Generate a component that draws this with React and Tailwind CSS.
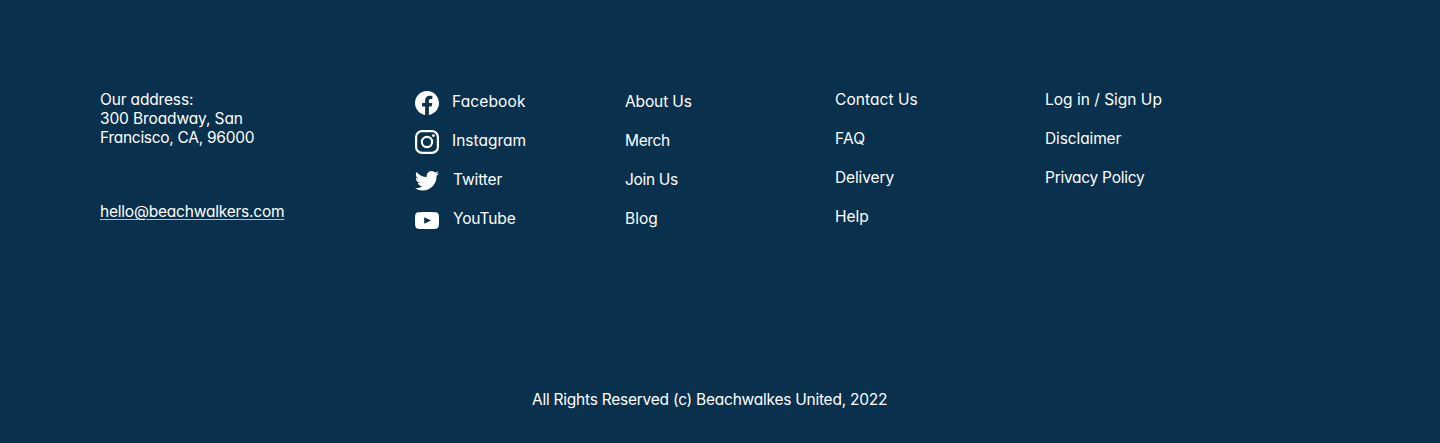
import React from "react";
import { BsFacebook, BsTwitter } from "react-icons/bs";

const InstagramIcon = () => (
  <svg viewBox="0 0 24 24" className="size-6" fill="none" stroke="currentColor">
    <rect x="1.1" y="1.1" width="21.8" height="21.8" rx="6" strokeWidth="2.2" />
    <circle cx="12" cy="12" r="5.1" strokeWidth="2.2" />
    <circle cx="18.4" cy="5.6" r="1.45" fill="currentColor" stroke="none" />
  </svg>
);

const YouTubeIcon = () => (
  <svg viewBox="0 0 24 17" className="h-[17px] w-6" fill="currentColor">
    <path
      fillRule="evenodd"
      d="M12 0C15.500 0 18.500.1 20.800.35C22.700.55 23.600 1.700 23.800 3.300C24.070 6.700 24.070 10.300 23.800 13.700C23.600 15.300 22.700 16.450 20.800 16.650C18.500 16.900 15.500 17 12 17S5.500 16.900 3.200 16.650C1.300 16.450.4 15.300.2 13.700C-.07 10.300-.07 6.700.2 3.300C.4 1.700 1.300.55 3.200.35C5.500.1 8.500 0 12 0ZM9.200 5.300V11.700L16 8.500Z"
    />
  </svg>
);

const socials = [
  { name: "Facebook", icon: <BsFacebook className="size-6" />, style: "pl-[13px] tracking-[0.14px]" },
  { name: "Instagram", icon: <InstagramIcon />, style: "pl-[13px]" },
  { name: "Twitter", icon: <BsTwitter className="mb-[2px] size-6" />, style: "pl-[14px] tracking-[-0.1px]" },
  { name: "YouTube", icon: <YouTubeIcon />, style: "pl-[14px] tracking-[-0.14px]" },
];

const columns = [
  {
    pad: "pt-[2px]",
    items: [
      ["About Us", "tracking-[-0.12px]"],
      ["Merch", "tracking-[-0.35px]"],
      ["Join Us", "tracking-[-0.33px]"],
      ["Blog", ""],
    ],
  },
  {
    pad: "",
    items: [
      ["Contact Us", "tracking-[0.06px]"],
      ["FAQ", "tracking-[0.2px]"],
      ["Delivery", "tracking-[-0.12px]"],
      ["Help", ""],
    ],
  },
  {
    pad: "",
    items: [
      ["Log in / Sign Up", ""],
      ["Disclaimer", "tracking-[-0.12px]"],
      ["Privacy Policy", "tracking-[-0.27px]"],
    ],
  },
];

export default function App() {
  return (
    <footer className="flex h-[443px] w-full flex-col bg-[#09304c] pt-[90px] font-['Inter',sans-serif] text-[15.5px] leading-[19px] text-white [font-feature-settings:'cv11']">
      <div className="flex pl-[100px]">
        <div className="w-[315px]">
          <p className="flex flex-col whitespace-nowrap">
            <span className="tracking-[-0.16px]">Our address:</span>
            <span className="tracking-[-0.12px]">300 Broadway, San</span>
            <span className="tracking-[-0.28px]">Francisco, CA, 96000</span>
          </p>
          <a className="mt-[55px] inline-block tracking-[-0.21px] underline decoration-white/70 decoration-1 underline-offset-2">
            hello@beachwalkers.com
          </a>
        </div>
        <ul className="flex w-[210px] flex-col gap-[15px]">
          {socials.map((s) => (
            <li key={s.name} className="flex h-6 items-start">
              <span className="mt-px flex h-6 w-6 items-center justify-center">{s.icon}</span>
              <span className={`mt-[2px] ${s.style}`}>{s.name}</span>
            </li>
          ))}
        </ul>
        {columns.map((c) => (
          <ul key={c.items[0][0]} className={`flex w-[210px] flex-col gap-5 ${c.pad}`}>
            {c.items.map(([text, style]) => (
              <li key={text} className={style}>{text}</li>
            ))}
          </ul>
        ))}
      </div>
      <p className="mt-auto mb-[34px] pl-[532px] tracking-[-0.245px]">All Rights Reserved (c) Beachwalkes United, 2022</p>
    </footer>
  );
}
